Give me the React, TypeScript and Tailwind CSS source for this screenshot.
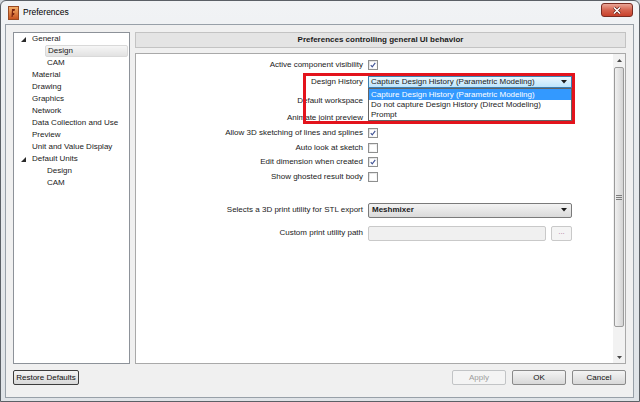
import React from "react";

const Check = ({ checked }: { checked: boolean }) => (
  <div className="w-[10px] h-[10px] border border-[#8e8f8f] bg-gradient-to-br from-[#dcdcdc] to-[#ffffff] p-[1px]">
    <div className="w-full h-full bg-white flex items-center justify-center">
      {checked && (
        <svg width="8" height="8" viewBox="0 0 8 8">
          <path d="M1 4.2 L3 6.4 L7 1.2" fill="none" stroke="#3f5295" strokeWidth="1.5" />
        </svg>
      )}
    </div>
  </div>
);

const Arrow = () => (
  <svg width="6" height="4" viewBox="0 0 6 4">
    <path d="M0 0 L6 0 L3 3.5 Z" fill="#1a1a1a" />
  </svg>
);

const Row = ({ label, h, children }: { label: string; h: string; children?: React.ReactNode }) => (
  <div className={"flex items-center " + h}>
    <div className="w-[227px] shrink-0 text-right whitespace-nowrap leading-none">{label}</div>
    <div className="ml-[5px] flex items-center">{children}</div>
  </div>
);

const TreeArrow = () => (
  <svg width="5" height="5" viewBox="0 0 5 5" className="mr-[6px]">
    <path d="M5 0 L5 5 L0 5 Z" fill="#2a2a2a" />
  </svg>
);

const TreeItem = ({ label, level, expander, selected }: { label: string; level: number; expander?: boolean; selected?: boolean }) => (
  <div className="h-[12px] flex items-center">
    {level === 0 ? (
      <div className="flex items-center pl-[7px]">
        {expander ? <TreeArrow /> : <div className="w-[11px]" />}
        <span className="whitespace-nowrap">{label}</span>
      </div>
    ) : (
      <div
        className={
          "ml-[31px] flex-1 h-[12px] flex items-center pl-[2px] " +
          (selected ? "bg-gradient-to-b from-[#f6f6f6] to-[#e2e2e2] border border-[#d9d9d9] rounded-[2px] pl-[1px]" : "")
        }
      >
        <span className="whitespace-nowrap">{label}</span>
      </div>
    )}
  </div>
);

const Btn = ({ label, w, disabled, strong }: { label: string; w: string; disabled?: boolean; strong?: boolean }) => (
  <div
    className={
      "h-[15px] flex items-center justify-center rounded-[2px] border " +
      w +
      " " +
      (disabled
        ? "border-[#c2c4c6] bg-[#f4f4f4] text-[#9c9c9c]"
        : strong
        ? "border-[#3c3c3c] bg-gradient-to-b from-[#f4f4f4] to-[#d8d8d8] text-[#111]"
        : "border-[#8a8a8a] bg-gradient-to-b from-[#f4f4f4] to-[#d8d8d8] text-[#111]")
    }
  >
    {label}
  </div>
);

export default function App() {
  return (
    <div className="w-[640px] h-[402px] overflow-hidden bg-[#cfd5db] font-['Liberation_Sans',Arial,sans-serif] text-[8px] text-[#1a1a1a]">
      <div className="w-full h-full flex flex-col border border-[#5b6066] rounded-t-[6px] bg-gradient-to-b from-[#f1f3f5] via-[#e6e9ec] to-[#dfe3e7]">
        {/* Title bar */}
        <div className="h-[23px] shrink-0 flex items-center pl-[7px] relative">
          <svg width="11" height="14" viewBox="0 0 11 14" className="mr-[4px]">
            <defs>
              <linearGradient id="ig" x1="0" y1="0" x2="0" y2="1">
                <stop offset="0" stopColor="#f6b26b" />
                <stop offset="1" stopColor="#c6501e" />
              </linearGradient>
            </defs>
            <rect x="0.5" y="0.5" width="10" height="13" fill="url(#ig)" stroke="#9a4a22" />
            <path d="M4 3 L7 3 L6.5 5 L5 5 L5 7 L6.5 7 L6 9 L5 9 L4.5 11 L3.5 11 Z" fill="#7a2410" />
          </svg>
          <span className="text-[8.5px] text-black">Preferences</span>
          <div className="absolute right-[6px] top-[2px] w-[32px] h-[14px] rounded-[3px] border border-[#7a2c22] bg-gradient-to-b from-[#eaa596] via-[#d5634f] to-[#c8402a] flex items-center justify-center">
            <svg width="10" height="9" viewBox="0 0 10 9">
              <path d="M2 1.5 L8 7.5 M8 1.5 L2 7.5" stroke="#5a1a12" strokeWidth="2.8" />
              <path d="M2 1.5 L8 7.5 M8 1.5 L2 7.5" stroke="#ffffff" strokeWidth="1.6" />
            </svg>
          </div>
        </div>

        {/* Body */}
        <div className="flex-1 ml-[4px] mr-[5px] mb-[3px] border border-[#98a0a8] bg-[#f0f0f0] flex flex-col pl-[7px] pr-[7px] pt-[7px] pb-[12px]">
          <div className="flex-1 flex gap-[5px] min-h-0">
            {/* Tree */}
            <div className="w-[117px] shrink-0 bg-white border border-[#8d9299] pr-[1px]">
              <TreeItem label="General" level={0} expander />
              <TreeItem label="Design" level={1} selected />
              <TreeItem label="CAM" level={1} />
              <TreeItem label="Material" level={0} />
              <TreeItem label="Drawing" level={0} />
              <TreeItem label="Graphics" level={0} />
              <TreeItem label="Network" level={0} />
              <TreeItem label="Data Collection and Use" level={0} />
              <TreeItem label="Preview" level={0} />
              <TreeItem label="Unit and Value Display" level={0} />
              <TreeItem label="Default Units" level={0} expander />
              <TreeItem label="Design" level={1} />
              <TreeItem label="CAM" level={1} />
            </div>

            {/* Right column */}
            <div className="flex-1 flex flex-col gap-[5px] min-w-0">
              <div className="h-[16px] shrink-0 border border-[#c3c3c3] bg-[#e4e4e4] flex items-center justify-center font-bold">
                Preferences controlling general UI behavior
              </div>
              <div className="flex-1 relative bg-white border border-[#a9a9a9] flex">
                <div className="flex-1 flex flex-col pt-[4px]">
                  <Row label="Active component visibility" h="h-[14px]">
                    <Check checked />
                  </Row>
                  <Row label="Design History" h="h-[20px]">
                    <div className="w-[204px] h-[12px] border border-[#3c7fb1] bg-gradient-to-b from-[#eaf6fd] to-[#bee6fd] flex items-center justify-between pl-[2px] pr-[4px]">
                      <span className="whitespace-nowrap leading-none">Capture Design History (Parametric Modeling)</span>
                      <Arrow />
                    </div>
                  </Row>
                  <Row label="Default workspace" h="h-[18px]" />
                  <Row label="Animate joint preview" h="h-[16px]" />
                  <Row label="Allow 3D sketching of lines and splines" h="h-[14px]">
                    <Check checked />
                  </Row>
                  <Row label="Auto look at sketch" h="h-[15px]">
                    <Check checked={false} />
                  </Row>
                  <Row label="Edit dimension when created" h="h-[14px]">
                    <Check checked />
                  </Row>
                  <Row label="Show ghosted result body" h="h-[15px]">
                    <Check checked={false} />
                  </Row>
                  <div className="h-[16px]" />
                  <Row label="Selects a 3D print utility for STL export" h="h-[20px]">
                    <div className="w-[204px] h-[15px] rounded-[2px] border border-[#7a7a7a] bg-gradient-to-b from-[#f3f3f3] to-[#dadada] flex items-center justify-between pl-[3px] pr-[4px]">
                      <span className="leading-none font-semibold">Meshmixer</span>
                      <Arrow />
                    </div>
                  </Row>
                  <div className="h-[3px]" />
                  <Row label="Custom print utility path" h="h-[20px]">
                    <div className="w-[178px] h-[15px] rounded-[2px] border border-[#c9c9c9] bg-[#f0f0f0]" />
                    <div className="ml-[5px] w-[21px] h-[15px] rounded-[2px] border border-[#c9c9c9] bg-[#f4f4f4] flex items-center justify-center text-[#b0809c] leading-none pb-[2px]">
                      ...
                    </div>
                  </Row>
                </div>

                {/* Scrollbar */}
                <div className="w-[12px] shrink-0 flex flex-col bg-[#f2f2f2]">
                  <div className="h-[12px] flex items-center justify-center">
                    <svg width="5" height="3" viewBox="0 0 5 3">
                      <path d="M0 3 L5 3 L2.5 0 Z" fill="#4a4a4a" />
                    </svg>
                  </div>
                  <div className="pt-[1px] px-[1px]">
                    <div className="h-[260px] rounded-[2px] border border-[#9a9a9a] bg-gradient-to-r from-[#f0f0f0] via-[#e2e2e2] to-[#d4d4d4] flex items-center justify-center">
                      <svg width="6" height="5" viewBox="0 0 6 5">
                        <path d="M0 0.5 H6 M0 2.5 H6 M0 4.5 H6" stroke="#7d7d7d" strokeWidth="1" />
                      </svg>
                    </div>
                  </div>
                  <div className="flex-1" />
                  <div className="h-[12px] flex items-center justify-center">
                    <svg width="5" height="3" viewBox="0 0 5 3">
                      <path d="M0 0 L5 0 L2.5 3 Z" fill="#4a4a4a" />
                    </svg>
                  </div>
                </div>

                {/* Dropdown list (open) */}
                <div className="absolute left-[232px] top-[34px] w-[204px] h-[33px] border border-[#646464] bg-white flex flex-col">
                  <div className="h-[11px] bg-[#3399ff] text-white flex items-center pl-[2px] whitespace-nowrap leading-none">
                    Capture Design History (Parametric Modeling)
                  </div>
                  <div className="h-[10px] flex items-center pl-[2px] whitespace-nowrap leading-none">
                    Do not capture Design History (Direct Modeling)
                  </div>
                  <div className="h-[10px] flex items-center pl-[2px] whitespace-nowrap leading-none">Prompt</div>
                </div>

                {/* Red highlight */}
                <div className="absolute left-[167px] top-[19px] w-[272px] h-[51px] border-[3px] border-[#e3131c] pointer-events-none" />
              </div>
            </div>
          </div>

          {/* Buttons */}
          <div className="h-[15px] mt-[6px] shrink-0 flex items-center justify-between">
            <Btn label="Restore Defaults" w="w-[66px]" strong />
            <div className="flex gap-[6px]">
              <Btn label="Apply" w="w-[54px]" disabled />
              <Btn label="OK" w="w-[54px]" />
              <Btn label="Cancel" w="w-[54px]" />
            </div>
          </div>
        </div>
      </div>
    </div>
  );
}
